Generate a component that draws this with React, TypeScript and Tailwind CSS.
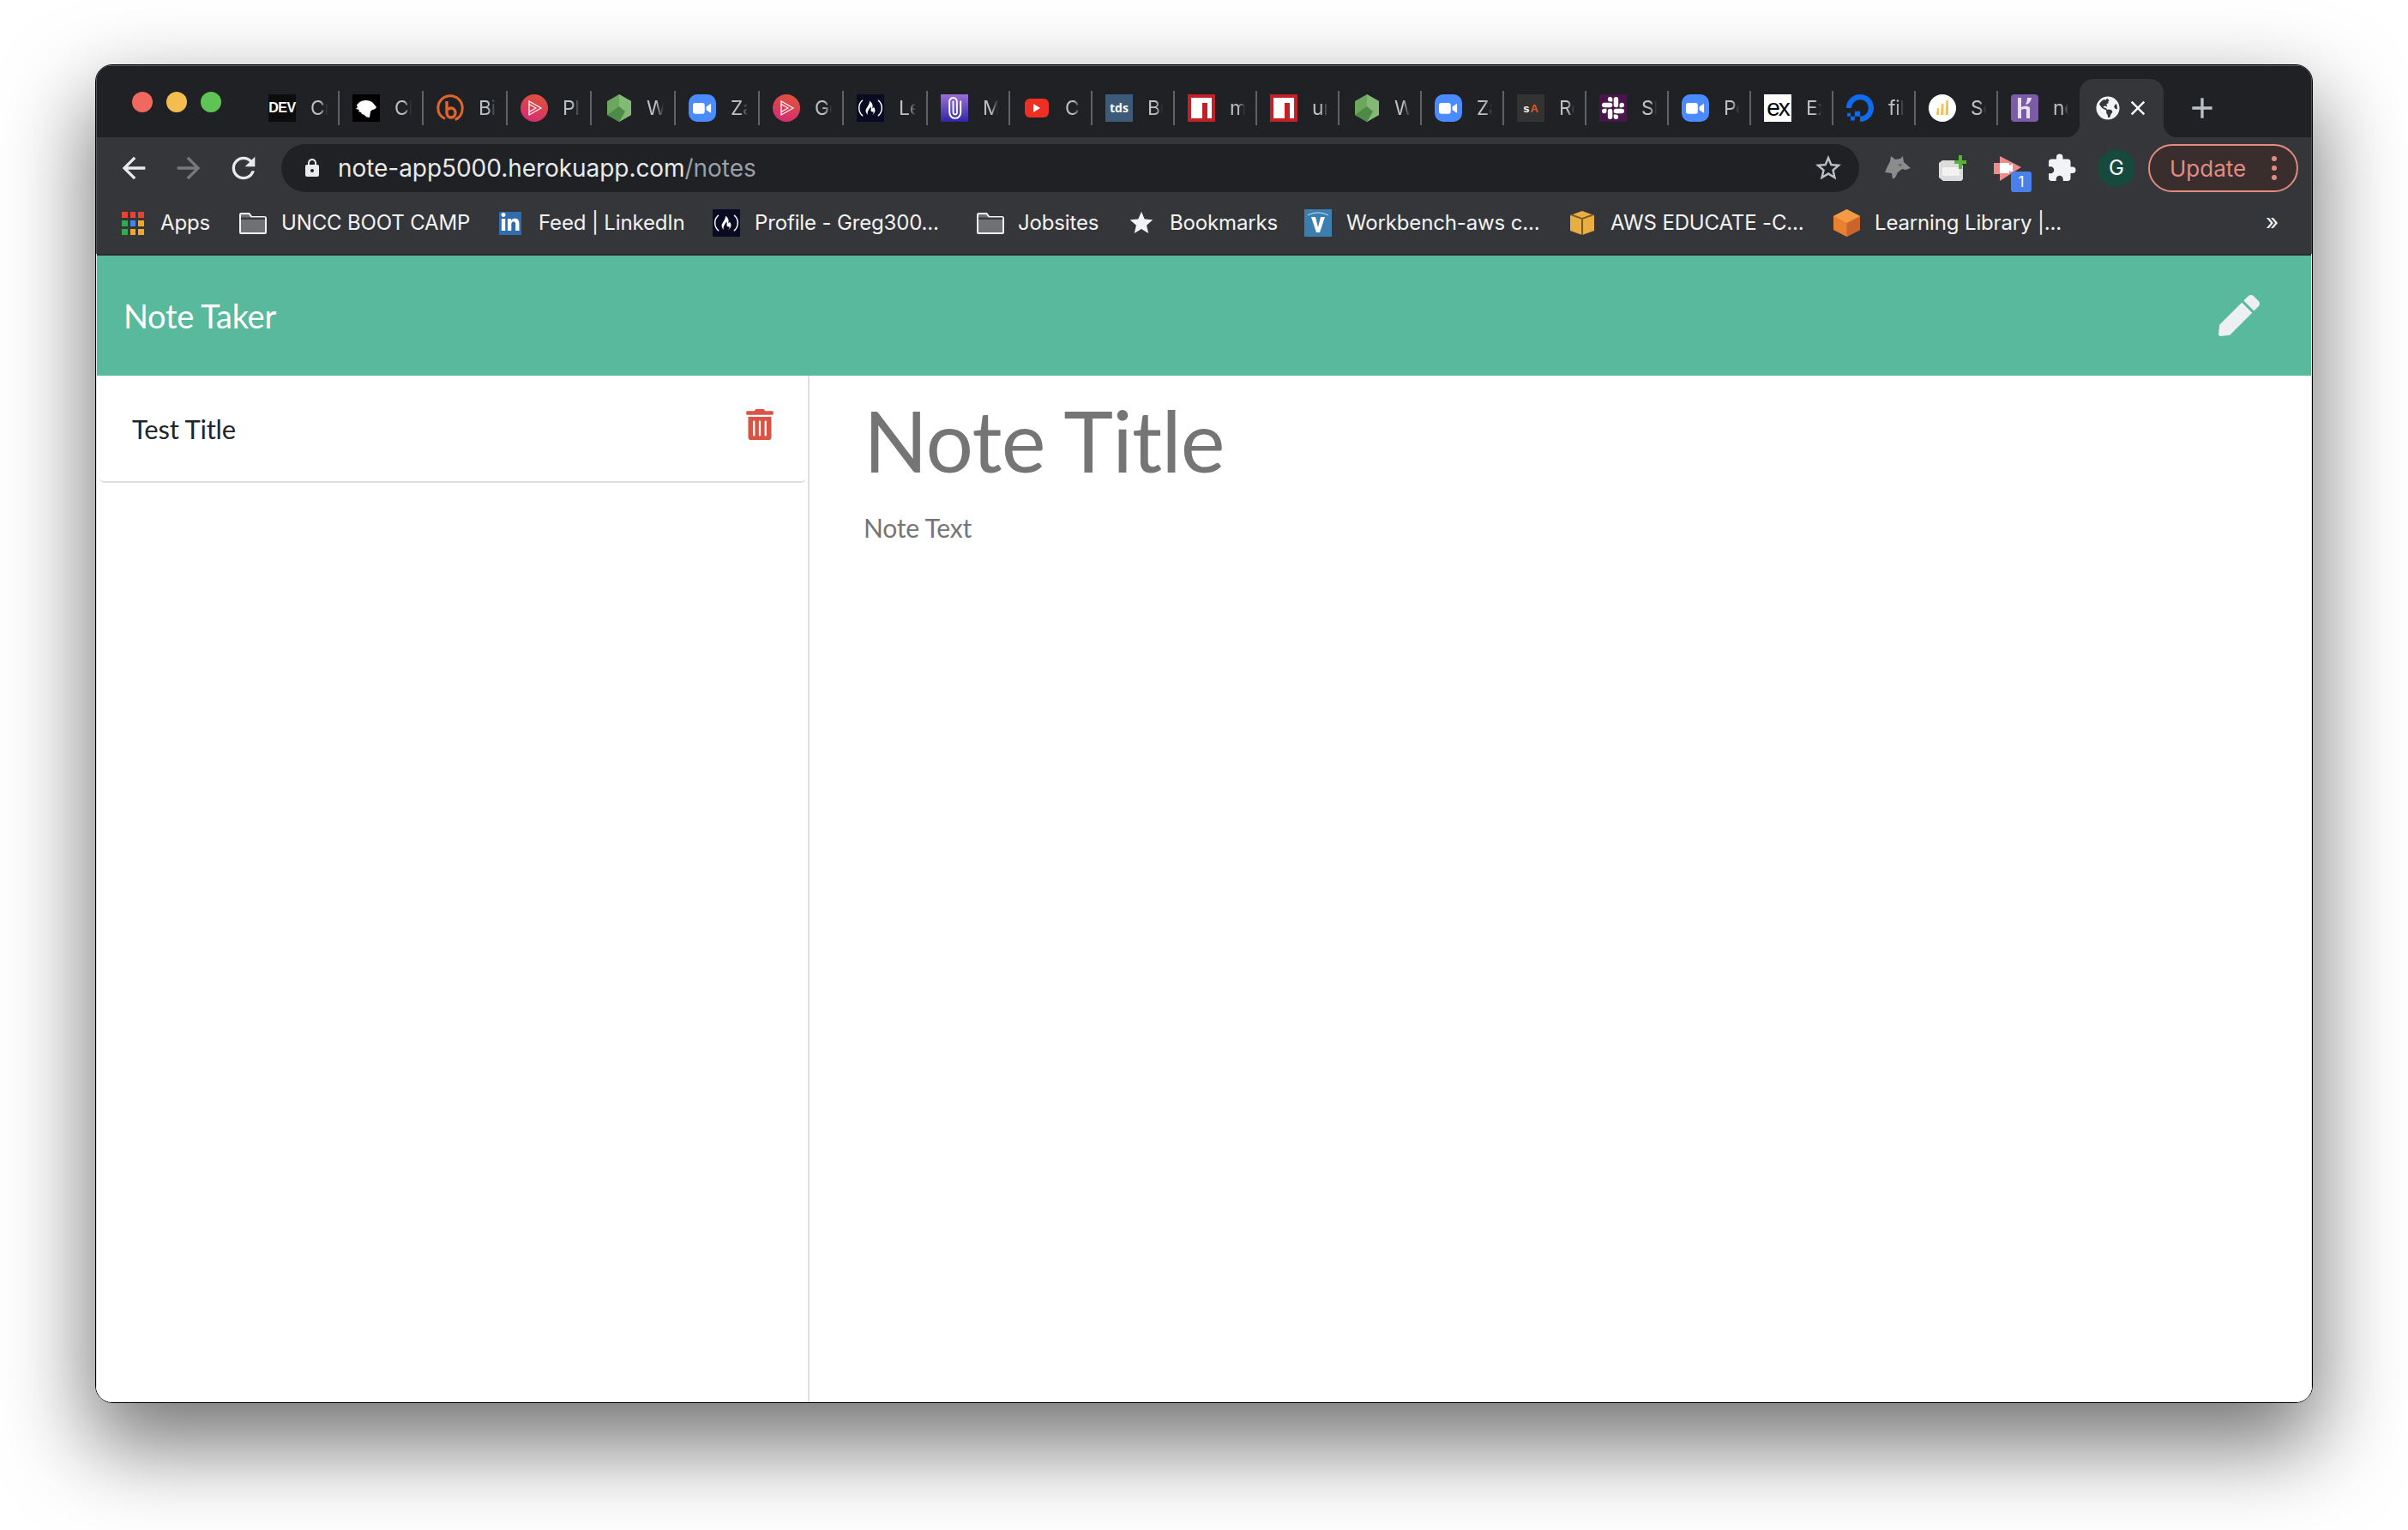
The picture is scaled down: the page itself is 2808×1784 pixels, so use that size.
import React from 'react';
import { FaPen, FaTrashAlt, FaGlobeAmericas, FaLinkedinIn } from 'react-icons/fa';
import { MdArrowBack, MdArrowForward, MdRefresh, MdLock, MdStarBorder, MdStar, MdExtension, MdClose, MdAdd } from 'react-icons/md';
import { SiFreecodecamp, SiSlack, SiDigitalocean } from 'react-icons/si';
import { Paperclip } from 'lucide-react';

const NodeIcon = () => (
  <svg viewBox="0 0 28 32" className="ml-[2px] h-[32px] w-[28px]">
    <path d="M14 0 28 8v16l-14 8L0 24V8z" fill="#6da75d" />
    <path d="M14 0 28 8v16l-14 8z" fill="#84b875" />
    <path d="M14 14 0 24l14 8 7-12z" fill="#4f8a48" />
  </svg>
);

const ZoomIcon = () => (
  <div className="flex h-[32px] w-[32px] items-center justify-center rounded-[10px] bg-[#4a8cff]">
    <svg viewBox="0 0 24 16" className="w-[22px]">
      <rect x="0" y="1" width="15" height="14" rx="3" fill="#fff" />
      <path d="m17 6 6-4v12l-6-4z" fill="#fff" />
    </svg>
  </div>
);

const PluralIcon = () => (
  <svg viewBox="0 0 32 32" className="h-[32px] w-[32px]">
    <defs>
      <linearGradient id="ps" x1="0.7" y1="0" x2="0.3" y2="1">
        <stop offset="0" stopColor="#e0533a" />
        <stop offset="1" stopColor="#d42b73" />
      </linearGradient>
    </defs>
    <circle cx="16" cy="16" r="16" fill="url(#ps)" />
    <path d="M10 8v16l14-8zM10 11.500v9l8-4.500z" fill="none" stroke="#fff" strokeWidth="1.200" />
  </svg>
);

const NpmIcon = () => (
  <div className="flex h-[32px] w-[32px] items-end justify-center bg-[#c12127] pb-[4px]">
    <div className="flex h-[24px] w-[24px] justify-end bg-white pr-[5px]">
      <div className="mt-[6px] h-[18px] w-[6px] bg-[#c12127]" />
    </div>
  </div>
);

const TABS: { label: string; icon: React.ReactNode; wide?: boolean }[] = [
  {
    label: 'Cr',
    wide: true,
    icon: (
      <div className="flex h-[32px] w-[32px] items-center justify-center bg-[#0d0d0d] text-[16px] leading-none font-bold tracking-[-0.5px] text-white [font-family:'Liberation_Sans',sans-serif]">
        DEV
      </div>
    ),
  },
  {
    label: 'Cl',
    wide: true,
    icon: (
      <div className="h-[32px] w-[32px] bg-black">
        <svg viewBox="0 0 32 32" className="h-[32px] w-[32px]">
          <path d="M5 13c2-4 6-6 11-6 3 0 6 1 8 3 1 2 3 3 4 5-1 2-3 3-5 3l-2 2-1 7c-3 0-5-1-6-3l-3-1-1-2-3-1 1-2-4-1 2-2z" fill="#fff" />
        </svg>
      </div>
    ),
  },
  {
    label: 'Bi',
    wide: true,
    icon: (
      <svg viewBox="0 0 32 32" className="h-[32px] w-[32px]">
        <path d="M10 28.500C4.500 26 1.800 21.500 1.800 16 1.800 8 8 1.800 16 1.800S30.200 8 30.200 16c0 6.500-3.500 11.500-8.500 13.500" fill="none" stroke="#e0652c" strokeWidth="3" />
        <path d="M12 8v13c0 3.500 2 6 5 6s5-2.500 5-5.500-2-5.500-5-5.500c-1.800 0-3 .8-3.500 2" fill="none" stroke="#e0652c" strokeWidth="3.400" />
      </svg>
    ),
  },
  { label: 'Pl', wide: true, icon: <PluralIcon /> },
  { label: 'Wh', wide: true, icon: <NodeIcon /> },
  { label: 'Za', wide: true, icon: <ZoomIcon /> },
  { label: 'Ge', wide: true, icon: <PluralIcon /> },
  {
    label: 'Le',
    wide: true,
    icon: (
      <div className="flex h-[32px] w-[32px] items-center justify-center bg-[#0a0a23]">
        <SiFreecodecamp className="text-[28px] text-white" />
      </div>
    ),
  },
  {
    label: 'Mi',
    icon: (
      <div className="flex h-[32px] w-[32px] items-center justify-center bg-gradient-to-b from-[#9b6fd6] to-[#3423a6]">
        <Paperclip className="h-[26px] w-[26px] -rotate-45 text-white" strokeWidth={1.8} />
      </div>
    ),
  },
  {
    label: 'Co',
    icon: (
      <div className="flex h-[22px] w-[28px] items-center justify-center rounded-[6px] bg-[#ee3024]">
        <svg viewBox="0 0 8 10" className="w-[8px]">
          <path d="M0 0l8 5-8 5z" fill="#fff" />
        </svg>
      </div>
    ),
  },
  {
    label: 'Bu',
    icon: (
      <div className="flex h-[32px] w-[32px] items-center justify-center bg-[#3d5a78] text-[14px] leading-none font-bold text-white [font-family:'Open_Sans',sans-serif]">
        tds
      </div>
    ),
  },
  { label: 'mo', icon: <NpmIcon /> },
  { label: 'ur', icon: <NpmIcon /> },
  { label: 'Wh', icon: <NodeIcon /> },
  { label: 'Za', icon: <ZoomIcon /> },
  {
    label: 'Re',
    icon: (
      <div className="flex h-[32px] w-[32px] items-center justify-center gap-[1px] bg-[#333] text-[13px] leading-none font-bold text-white [font-family:'Liberation_Sans',sans-serif]">
        s<span className="text-[#e2562b]">A</span>
      </div>
    ),
  },
  {
    label: 'Sl',
    icon: (
      <div className="flex h-[32px] w-[32px] items-center justify-center bg-[#4a154b]">
        <SiSlack className="text-[26px] text-white" />
      </div>
    ),
  },
  { label: 'Po', icon: <ZoomIcon /> },
  {
    label: 'Ex',
    icon: (
      <div className="flex h-[32px] w-[32px] items-center justify-center bg-white text-[28px] leading-none tracking-[-2px] text-black [font-family:'Liberation_Sans',sans-serif]">
        ex
      </div>
    ),
  },
  { label: 'fil', icon: <SiDigitalocean className="text-[32px] text-[#0f6bf0]" /> },
  {
    label: 'Se',
    icon: (
      <svg viewBox="0 0 32 32" className="h-[32px] w-[32px]">
        <circle cx="16" cy="16" r="16" fill="#fff" />
        <path d="M9 24l1-8h2v8zM14 24l1-13h2.500v13zM19.500 24l1-17H23v17z" fill="#f2c14e" />
      </svg>
    ),
  },
  {
    label: 'ne',
    icon: (
      <svg viewBox="0 0 32 32" className="h-[32px] w-[32px]">
        <rect width="32" height="32" rx="4" fill="#7c5ca6" />
        <path d="M8 4h4v11c3-1.500 8-2 10 .5V28h-4V18c-1-1.500-4-1-6 0v10H8zM19 4h5c-.5 3-2 6-4.500 7.500H17c1.500-2 2-5 2-7.500z" fill="#e8e2f0" />
      </svg>
    ),
  },
];

const FolderIcon = () => (
  <svg viewBox="0 0 32 25" className="h-[25px] w-[32px]">
    <path d="M1 23V2.500C1 1.700 1.700 1 2.500 1h9l3 4h15c.8 0 1.500.7 1.500 1.500V23c0 .6-.4 1-1 1H2c-.6 0-1-.4-1-1z" fill="#6f7175" stroke="#f1f3f4" strokeWidth="2" />
    <path d="M2 5.500h28V8H2z" fill="#3a3b3f" />
  </svg>
);

const AppsIcon = () => {
  const cells = ['bg-[#ea4335]', 'bg-[#ea4335]', 'bg-[#ea4335]', 'bg-[#34a853]', 'bg-[#4285f4]', 'bg-[#f4a62a]', 'bg-[#34a853]', 'bg-[#f4a62a]', 'bg-[#f4a62a]'];
  return (
    <div className="grid w-[26px] grid-cols-3 gap-[3px]">
      {cells.map((c, i) => (
        <div key={i} className={`h-[7px] ${c}`} />
      ))}
    </div>
  );
};

const Bookmark = ({ icon, label, className, textClass }: { icon: React.ReactNode; label: string; className: string; textClass: string }) => (
  <div className={`flex shrink-0 items-center ${className}`}>
    {icon}
    <span className={`whitespace-nowrap ${textClass}`}>{label}</span>
  </div>
);

export default function App() {
  return (
    <div className="h-[1784px] w-[2808px] overflow-hidden bg-white pt-[75px] pl-[111px]">
      <div className="flex h-[1561px] w-[2586px] flex-col overflow-hidden rounded-[20px] border border-black shadow-[0_44px_100px_6px_rgba(0,0,0,0.54)]">
        {/* browser chrome */}
        <div className="border-x border-t border-[#555] bg-[#202124] text-[#e8eaed] [font-family:Inter,sans-serif]">
          <div className="flex h-[83px] items-end">
            <div className="flex h-full w-[185px] shrink-0 gap-[16px] pt-[30px] pl-[41px]">
              <div className="h-[24px] w-[24px] rounded-full bg-[#f1685e]" />
              <div className="h-[24px] w-[24px] rounded-full bg-[#f5bd4f]" />
              <div className="h-[24px] w-[24px] rounded-full bg-[#5ec454]" />
            </div>
            {TABS.map((tab, i) => (
              <div key={i} className={`flex h-[68px] shrink-0 items-center pl-[15px] ${tab.wide ? 'w-[98px]' : 'w-[96px]'}`}>
                <div className="flex w-[32px] shrink-0 items-center justify-center">{tab.icon}</div>
                <div className="ml-[17px] min-w-0 flex-1 overflow-hidden text-[23px] tracking-[-0.3px] text-[#bdc1c6] [mask-image:linear-gradient(to_right,black_55%,transparent)]">{tab.label}</div>
                {i < TABS.length - 1 ? <div className="ml-[12px] h-[40px] w-[2px] shrink-0 bg-[#5f6368]" /> : <div className="ml-[12px] w-[2px] shrink-0" />}
              </div>
            ))}
            <div className="relative ml-[-1px] flex h-[68px] w-[98px] shrink-0 items-center rounded-t-[16px] bg-[#35363a] pl-[19px]">
              <div className="absolute bottom-0 left-[-16px] h-[16px] w-[16px] bg-[radial-gradient(circle_at_0_0,#202124_16px,#35363a_16.5px)]" />
              <div className="absolute right-[-16px] bottom-0 h-[16px] w-[16px] bg-[radial-gradient(circle_at_100%_0,#202124_16px,#35363a_16.5px)]" />
              <FaGlobeAmericas className="text-[28px] text-[#f1f3f4]" />
              <MdClose className="ml-[7px] text-[28px] text-white" />
            </div>
            <MdAdd className="mb-[14px] ml-[25px] text-[40px] text-[#bdc1c6]" />
          </div>

          <div className="flex h-[72px] items-start bg-[#35363a] pt-[8px]">
            <div className="flex h-[56px] items-center pl-[23px]">
              <MdArrowBack className="text-[40px] text-[#e8eaed]" />
              <MdArrowForward className="ml-[24px] text-[40px] text-[#77797d]" />
              <MdRefresh className="ml-[24px] text-[40px] text-[#e8eaed]" />
            </div>
            <div className="ml-[24px] flex h-[56px] w-[1840px] shrink-0 items-center rounded-full bg-[#202124] pr-[18px] pl-[24px]">
              <MdLock className="text-[24px] text-[#e8eaed]" />
              <div className="ml-[18px] flex-1 text-[28px] tracking-[-0.05px] whitespace-nowrap">
                note-app5000.herokuapp.com<span className="text-[#9aa0a6]">/notes</span>
              </div>
              <MdStarBorder className="text-[36px] text-[#bdc1c6]" />
            </div>
            <div className="flex h-[56px] items-center">
              <svg viewBox="0 0 30 28" className="ml-[30px] h-[28px] w-[30px]">
                <path d="M6 6 7 0l5 4 6-1 3-3 1 7 8 7-6 2-4-1-5 4-3 6-3 2-1-7-8-1 3-7z" fill="#8c8c8c" />
                <path d="M15 9l5 1-2 2z" fill="#55565a" />
              </svg>
              <svg viewBox="0 0 32 30" className="ml-[33px] h-[30px] w-[32px]">
                <path d="M0 9l4-3h16l8 6v16l-2 2H5l-5-4z" fill="#dcdcdc" />
                <path d="M4 14h20v10H4z" fill="#f2f2f2" />
                <path d="M18 6h5V0h4v6h5v4h-5v6h-4v-6h-5z" fill="#58b23c" />
              </svg>
              <div className="relative ml-[32px] h-[30px] w-[32px]">
                <svg viewBox="0 0 32 30" className="h-[30px] w-[32px]">
                  <path d="M7 1l25 13L7 30v-8H0V9h7z" fill="#f18b8b" />
                  <path d="M7 9h11v3l4-2v10l-4-2v3H7z" fill="#fff" />
                </svg>
                <div className="absolute top-[19px] left-[20px] flex h-[24px] w-[24px] items-center justify-center rounded-[3px] bg-[#4a80ea] text-[17px] leading-none text-white">1</div>
              </div>
              <MdExtension className="ml-[29px] text-[36px] text-[#f1f3f4]" />
              <div className="ml-[24px] flex h-[44px] w-[44px] items-center justify-center rounded-full bg-[#174a3c] text-[24px] text-white">G</div>
              <div className="ml-[15px] flex h-[56px] w-[175px] items-center rounded-full border-2 border-[#e28c80] bg-[#3a2d2e] pl-[23px] text-[26px] text-[#e28c80]">
                Update
                <div className="ml-[30px] flex flex-col gap-[5px]">
                  <div className="h-[6px] w-[6px] rounded-full bg-[#e28c80]" />
                  <div className="h-[6px] w-[6px] rounded-full bg-[#e28c80]" />
                  <div className="h-[6px] w-[6px] rounded-full bg-[#e28c80]" />
                </div>
              </div>
            </div>
          </div>

          <div className="flex h-[64px] items-center bg-[#35363a] pb-[8px] text-[24px] tracking-[-0.15px] text-[#f1f3f4]">
            <Bookmark className="ml-[29px] gap-[19px]" textClass="w-[57px]" icon={<AppsIcon />} label="Apps" />
            <Bookmark className="ml-[35px] gap-[17px]" textClass="w-[217px]" icon={<FolderIcon />} label="UNCC BOOT CAMP" />
            <Bookmark className="ml-[37px] gap-[20px]" textClass="w-[167px]" icon={<div className="flex h-[27px] w-[26px] items-center justify-center bg-[#2f6cb0]"><FaLinkedinIn className="text-[24px] text-white" /></div>} label="Feed | LinkedIn" />
            <Bookmark className="ml-[36px] gap-[17px]" textClass="w-[215px]" icon={<div className="flex h-[32px] w-[32px] items-center justify-center bg-[#0a0a23]"><SiFreecodecamp className="text-[28px] text-white" /></div>} label="Profile - Greg300..." />
            <Bookmark className="ml-[44px] gap-[16px]" textClass="w-[94px]" icon={<FolderIcon />} label="Jobsites" />
            <Bookmark className="ml-[34px] gap-[17px]" textClass="w-[124px]" icon={<MdStar className="text-[32px] text-[#f1f3f4]" />} label="Bookmarks" />
            <Bookmark
              className="ml-[33px] gap-[17px]"
              textClass="w-[221px]"
              icon={
                <div className="flex h-[32px] w-[32px] items-center justify-center bg-[#3a7fb0]">
                  <svg viewBox="0 0 32 32" className="h-[32px] w-[32px]">
                    <path d="M8 9h5l3 12 3-12h5l-6 18h-4z" fill="#fff" />
                    <path d="M4 7c8-4 16-4 24 0" fill="none" stroke="#cfe3ef" strokeWidth="1" />
                  </svg>
                </div>
              }
              label="Workbench-aws c..."
            />
            <Bookmark
              className="ml-[40px] gap-[19px]"
              textClass="w-[222px]"
              icon={
                <svg viewBox="0 0 28 28" className="h-[28px] w-[28px]">
                  <path d="M14 0l14 5v18l-14 5-14-5V5z" fill="#e9ae42" />
                  <path d="M0 5l14 5 14-5-3-1-11 4L3 4z" fill="#7a5a1f" />
                  <path d="M13 10h2v18h-2z" fill="#7a5a1f" />
                </svg>
              }
              label="AWS EDUCATE -C..."
            />
            <Bookmark
              className="ml-[38px] gap-[17px]"
              textClass="w-[213px]"
              icon={
                <svg viewBox="0 0 31 32" className="h-[32px] w-[31px]">
                  <path d="M15.500 0 31 8v16l-15.500 8L0 24V8z" fill="#e8812f" />
                  <path d="M15.500 16 31 8v16l-15.500 8z" fill="#c9652a" />
                  <path d="M15.500 0 31 8l-15.500 8L0 8z" fill="#f29a44" />
                </svg>
              }
              label="Learning Library |..."
            />
            <span className="mt-[-4px] mr-[38px] ml-auto text-[26px]">»</span>
          </div>
        </div>

        {/* page */}
        <div className="flex min-h-0 flex-1 flex-col border-x border-b border-[#e4e4e4] bg-white [font-family:Lato,sans-serif]">
          <div className="h-[2px] bg-[#2a2b2e]" />
          <div className="flex h-[140px] shrink-0 items-center justify-between bg-[#58b99d] pr-[60px] pl-[31px]">
            <span className="text-[38px] tracking-[-0.3px] text-white">Note Taker</span>
            <FaPen className="text-[48px] text-[#ecf0f1]" />
          </div>
          <div className="flex min-h-0 flex-1">
            <div className="w-[831px] shrink-0 border-r-2 border-[#dedede]">
              <div className="mr-[2px] ml-[3px] flex h-[125px] items-start justify-between rounded-b-[6px] border-b-2 border-[#dfdfdf] pt-[39px] pr-[36px] pl-[38px]">
                <span className="text-[31px] leading-[46px] tracking-[-0.2px] text-[#212529]">Test Title</span>
                <FaTrashAlt className="text-[36px] text-[#d95444]" />
              </div>
            </div>
            <div className="flex-1 pt-[15px] pl-[63px]">
              <div className="text-[98px] leading-[120px] tracking-[-0.7px] text-[#757575]">Note Title</div>
              <div className="pt-[18px] text-[30px] leading-[48px] tracking-[-0.2px] text-[#757575]">Note Text</div>
            </div>
          </div>
        </div>
      </div>
    </div>
  );
}
